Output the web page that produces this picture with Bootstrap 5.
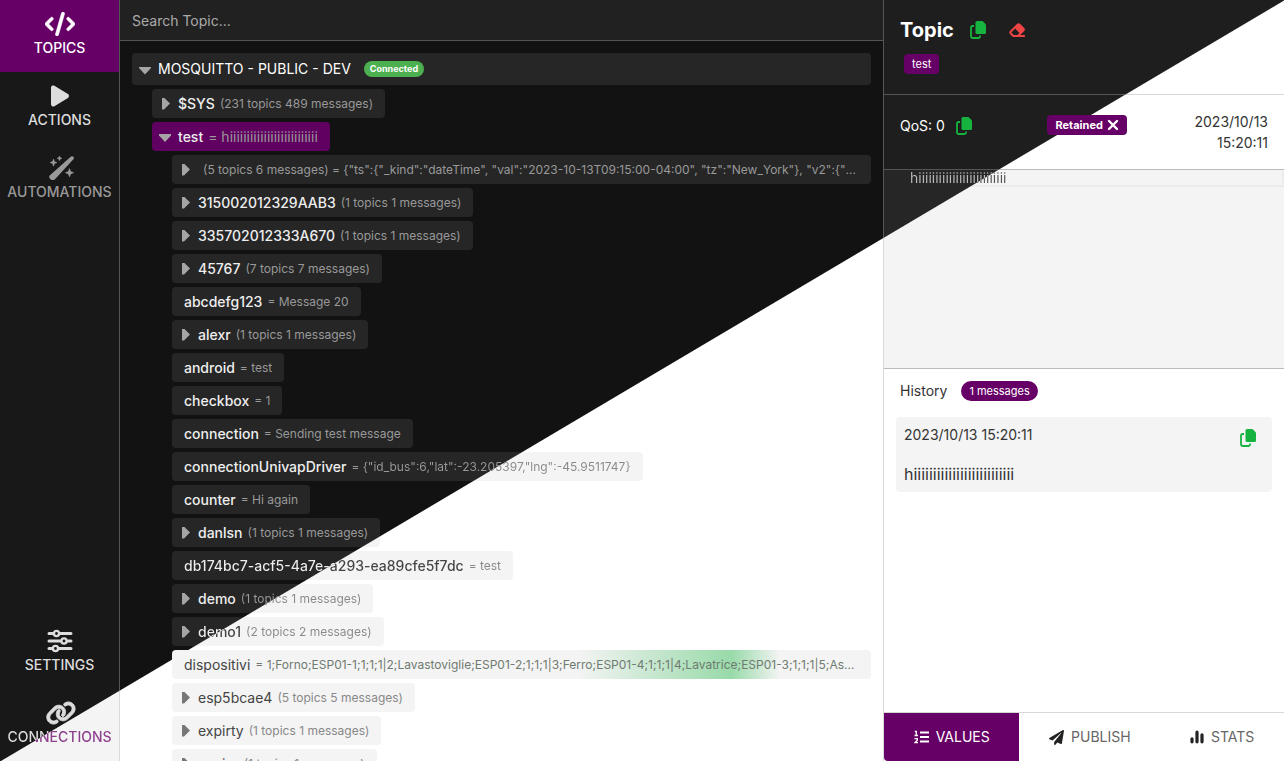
<!DOCTYPE html>
<html lang="en">
<head>
<meta charset="utf-8">
<meta name="viewport" content="width=device-width, initial-scale=1">
<title>MQTT Topics</title>
<link href="https://cdn.jsdelivr.net/npm/bootstrap@5.3.0/dist/css/bootstrap.min.css" rel="stylesheet">
<style>
  /* Each --d/--l pair is the dark and the light theme colour of a surface;
     .duo paints both, divided along the window's diagonal. */
  :root { --brand: #660066; --ok: #17b33f; }
  body { font-family: "Inter", sans-serif; font-size: 14px; line-height: 20px; color: #333; }
  .duo, .duo-ink {
    background: linear-gradient(to bottom right, var(--d) 50%, var(--l) calc(50% + 1px)) fixed;
  }
  .duo-ink { -webkit-background-clip: text; background-clip: text; color: transparent; }
  .line { --d: #555; --l: #d8d8d8; }
  .rule-h { height: 1px; flex: none; }
  .rule-v { width: 1px; flex: none; }
  .rule-strong { --l: #bbb; }

  .side { --d: #181818; --l: #f4f4f4; width: 119px; flex: none; }
  .side a { height: 72px; padding: 12px 0; gap: 2px; color: #ddd; font-weight: 500; text-decoration: none; }
  .side a.on { background: var(--brand); color: #fff; }
  .side a.dim { color: #999; }
  .side svg { height: 24px; }
  .side .duo-ink { --d: #ddd; --l: #8d3f8d; }

  .mid { --d: #121212; --l: #fff; min-width: 0; }
  .find { height: 40px; padding: 0 12px; background: #212121; border: 0; color: #bbb; }
  .find::placeholder { color: #aaa; }
  .tree { padding: 12px 12px 0; overflow: hidden; min-height: 0; }
  .tree ul { list-style: none; margin: 0; padding: 4px 0 0 20px; display: flex; flex-direction: column; gap: 4px; }
  .node { --d: #262626; --l: #f4f4f4; border: 0; border-radius: 4px; height: 29px; padding: 0 12px;
    max-width: 100%; display: flex; align-items: center; gap: 5px; text-align: left; white-space: nowrap; color: #fff; }
  .node.root { height: 32px; width: 100%; }
  .node.on { background: #600060; }
  .node b { font-weight: 500; color: #eee; }
  .node b.duo-ink { --d: #eee; --l: #444; color: transparent; }
  .node small { font-size: 12px; color: #999; overflow: hidden; text-overflow: ellipsis; }
  .node.on small { font-size: 14px; }
  .node small.duo-ink { --d: #999; --l: #888; color: transparent; }
  .node.lit b { font-weight: 400; color: #444; }
  .node.lit small { color: #888; }
  .node.fresh { background: linear-gradient(90deg, #f4f4f4 58%, #98daa9 80%, #f4f4f4 87%); width: 100%; }
  .node.fresh small { color: #6f7a70; }
  .node.shut::before, .node.open::before { content: ""; flex: none; background: #a5a5a5; }
  .node.shut::before { width: 8px; height: 12px; margin: 0 3px 0 -2px; clip-path: polygon(0 0, 25% 0, 100% 50%, 25% 100%, 0 100%); }
  .node.open::before { width: 12px; height: 8px; margin: 3px 2px 0 -5px; clip-path: polygon(0 0, 100% 0, 100% 20%, 50% 100%, 0 20%); }
  .node.lit::before { background: #777; }
  .conn { background: #4caf50; font-size: 9px; line-height: 10px; font-weight: 700; padding: 3px 6px; margin-left: 8px; }

  .info { --d: #1e1e1e; --l: #fff; width: 400px; flex: none; }
  .info h1 { font-size: 20px; font-weight: 700; line-height: 24px; color: #fff; }
  .pill { background: var(--brand); color: #fff; font-size: 11px; line-height: 20px; border-radius: 4px; }
  .head { height: 94px; padding: 18px 16px; }
  .head-tools { gap: 22px; }
  .head .pill { margin: 12px 0 0 4px; }
  .meta { height: 74px; padding: 20px 16px 0; line-height: 21px; }
  .meta .pill { margin-left: 8px; }
  .meta time { margin-top: -4px; }
  .qos { gap: 11px; }
  .plain { border: 0; background: none; padding: 0; color: inherit; line-height: 0; }
  .msg { --d: #262626; --l: #f4f4f4; height: 198px; padding-left: 26px; }
  .msg-edge { --l: #ececec; padding: 0 2px 2px 0; }
  .msg-line { --l: #f4f4f4; }
  .msg pre { font: inherit; line-height: 15px; --d: #bbb; --l: #555; }
  .past { padding: 12px; }
  .past-head { gap: 14px; }
  .item { background: #f4f4f4; border-radius: 4px; padding: 8px; height: 75px; }
  .item .val { font-size: 16px; line-height: 20px; }
  .tabs { height: 48px; }
  .tabs button { border: 0; background: #fff; color: #666; padding: 0 28px; gap: 7px; }
  .tabs button svg { color: #222; }
  .tabs button.on, .tabs button.on svg { background: var(--brand); color: #fff; }
  .tabs button.on { border-bottom-left-radius: 4px; }
  .ok { color: var(--ok); }
</style>
</head>
<body>
<svg class="d-none" aria-hidden="true">
  <symbol id="copy" viewBox="0 0 16 18">
    <path fill="currentColor" d="M7 0h5.500L16 3.500V11.500a1.500 1.500 0 0 1-1.500 1.500H7a1.500 1.500 0 0 1-1.500-1.500V1.500A1.500 1.500 0 0 1 7 0z"/>
    <path fill="none" stroke="currentColor" stroke-width="1.800" d="M4 5H2.500A1.500 1.500 0 0 0 1 6.500v9A1.500 1.500 0 0 0 2.500 17h6a1.500 1.500 0 0 0 1.500-1.500v-1"/>
  </symbol>
</svg>
<div class="d-flex vh-100 overflow-hidden">

  <nav class="side duo d-flex flex-column text-center" aria-label="Main">
    <a class="on d-flex flex-column align-items-center" href="#topics">
      <svg viewBox="0 0 640 512" fill="currentColor" stroke="currentColor" stroke-width="14" aria-hidden="true"><path d="M392.800 1.200c-17-4.900-34.700 5-39.600 22l-128 448c-4.900 17 5 34.700 22 39.600s34.700-5 39.600-22l128-448c4.900-17-5-34.700-22-39.600zm80.600 120.100c-12.500 12.500-12.500 32.800 0 45.300L562.700 256l-89.400 89.400c-12.500 12.500-12.500 32.800 0 45.300s32.800 12.500 45.300 0l112-112c12.500-12.500 12.500-32.800 0-45.300l-112-112c-12.500-12.500-32.800-12.500-45.300 0zm-306.700 0c-12.500-12.500-32.800-12.500-45.300 0l-112 112c-12.500 12.500-12.500 32.800 0 45.300l112 112c12.500 12.500 32.800 12.500 45.300 0s12.500-32.800 0-45.300L77.300 256l89.400-89.400c12.500-12.500 12.500-32.800 0-45.300z"/></svg>
      <span>TOPICS</span></a>
    <a class="d-flex flex-column align-items-center" href="#actions">
      <svg viewBox="0 0 384 512" fill="currentColor" aria-hidden="true"><path d="M73 39c-14.800-9.100-33.400-9.400-48.500-.9S0 62.600 0 80V432c0 17.400 9.400 33.400 24.500 41.900s33.700 8.100 48.500-.9L361 297c14.300-8.700 23-24.200 23-41s-8.700-32.200-23-41L73 39z"/></svg>
      <span>ACTIONS</span></a>
    <a class="dim d-flex flex-column align-items-center" href="#automations">
      <svg viewBox="-5 0 31 24" fill="currentColor" aria-hidden="true"><path d="M1 19.300 22 .6Q23.300-.3 24.400.7 25.300 1.800 24.600 3L6 23.200Q3.800 25 1.500 23.300-.8 21.300 1 19.300z"/><path d="M4.500 3l1 2.600L8 6.600 5.500 7.600 4.500 10.200 3.500 7.600 1 6.600l2.500-1zM10.500 0l.7 1.600 1.700.7-1.700.7-.7 1.700-.7-1.700L8.100 2.300l1.700-.7zM20.500 12.500l1.200 3L24.700 16.700l-3 1.200-1.200 3-1.200-3-3-1.200 3-1.200z" stroke="currentColor" stroke-width=".5"/></svg>
      <span>AUTOMATIONS</span></a>
    <a class="mt-auto d-flex flex-column align-items-center" href="#settings">
      <svg viewBox="0 0 26 24" fill="none" stroke="currentColor" stroke-width="3" stroke-linecap="round" aria-hidden="true"><path d="M2 4.500h4M13 4.500h11M2 12h11M21 12h3M2 19.500h3M12 19.500h12"/><g stroke-width="2.400"><circle cx="9.500" cy="4.500" r="2.600"/><circle cx="17" cy="12" r="2.600"/><circle cx="8.500" cy="19.500" r="2.600"/></g></svg>
      <span>SETTINGS</span></a>
    <a class="d-flex flex-column align-items-center" href="#connections">
      <svg viewBox="-20 0 600 512" fill="currentColor" stroke="currentColor" stroke-width="20" aria-hidden="true" overflow="visible"><path d="M579.800 267.700c56.500-56.500 56.500-148 0-204.500c-50-50-128.800-56.500-186.300-15.400l-1.600 1.100c-14.400 10.300-17.700 30.300-7.400 44.600s30.300 17.700 44.600 7.400l1.600-1.100c32.100-22.900 76-19.300 103.800 8.600c31.500 31.500 31.500 82.500 0 114L422.300 334.800c-31.500 31.500-82.500 31.500-114 0c-27.900-27.900-31.500-71.800-8.600-103.800l1.100-1.600c10.300-14.400 6.900-34.400-7.400-44.600s-34.400-6.900-44.600 7.400l-1.100 1.600C206.500 251.200 213 330 263 380c56.500 56.500 148 56.500 204.500 0L579.800 267.700zM60.200 244.300c-56.500 56.500-56.500 148 0 204.500c50 50 128.800 56.500 186.300 15.400l1.600-1.100c14.400-10.300 17.700-30.300 7.400-44.600s-30.300-17.700-44.600-7.400l-1.600 1.100c-32.100 22.900-76 19.300-103.800-8.600C74 372 74 321 105.500 289.500L217.700 177.200c31.500-31.500 82.500-31.500 114 0c27.900 27.900 31.500 71.800 8.600 103.900l-1.100 1.600c-10.300 14.400-6.900 34.400 7.400 44.600s34.400 6.900 44.600-7.400l1.100-1.600C433.500 260.800 427 182 377 132c-56.500-56.500-148-56.500-204.500 0L60.200 244.300z"/></svg>
      <span class="duo-ink">CONNECTIONS</span></a>
  </nav>
  <div class="duo line rule-v"></div>

  <main class="mid duo d-flex flex-column flex-grow-1">
    <input class="find flex-shrink-0 w-100" type="search" placeholder="Search Topic..." aria-label="Search Topic">
    <div class="duo line rule-h"></div>
    <div class="tree flex-grow-1">
      <button class="node duo root open" type="button">MOSQUITTO - PUBLIC - DEV <span class="badge rounded-pill conn">Connected</span></button>
      <ul>
        <li><button class="node duo shut" type="button"><b>$SYS</b><small>(231 topics 489 messages)</small></button></li>
        <li><button class="node on open" type="button"><b>test</b><small>= hiiiiiiiiiiiiiiiiiiiiiiiiii</small></button>
          <ul>
            <li><button class="node duo shut" type="button"><b></b><small>(5 topics 6 messages) = {"ts":{"_kind":"dateTime", "val":"2023-10-13T09:15:00-04:00", "tz":"New_York"}, "v2":{"_kind":"dateTime", "val":"2023-10-13"}}</small></button></li>
            <li><button class="node duo shut" type="button"><b>315002012329AAB3</b><small>(1 topics 1 messages)</small></button></li>
            <li><button class="node duo shut" type="button"><b>335702012333A670</b><small>(1 topics 1 messages)</small></button></li>
            <li><button class="node duo shut" type="button"><b>45767</b><small>(7 topics 7 messages)</small></button></li>
            <li><button class="node duo" type="button"><b>abcdefg123</b><small>= Message 20</small></button></li>
            <li><button class="node duo shut" type="button"><b>alexr</b><small>(1 topics 1 messages)</small></button></li>
            <li><button class="node duo" type="button"><b>android</b><small>= test</small></button></li>
            <li><button class="node duo" type="button"><b>checkbox</b><small>= 1</small></button></li>
            <li><button class="node duo" type="button"><b>connection</b><small>= Sending test message</small></button></li>
            <li><button class="node duo" type="button"><b>connectionUnivapDriver</b><small class="duo-ink">= {"id_bus":6,"lat":-23.205397,"lng":-45.9511747}</small></button></li>
            <li><button class="node duo" type="button"><b>counter</b><small>= Hi again</small></button></li>
            <li><button class="node duo shut" type="button"><b>danlsn</b><small>(1 topics 1 messages)</small></button></li>
            <li><button class="node duo" type="button"><b class="duo-ink">db174bc7-acf5-4a7e-a293-ea89cfe5f7dc</b><small class="duo-ink">= test</small></button></li>
            <li><button class="node duo shut" type="button"><b>demo</b><small class="duo-ink">(1 topics 1 messages)</small></button></li>
            <li><button class="node duo shut" type="button"><b class="duo-ink">demo1</b><small class="duo-ink">(2 topics 2 messages)</small></button></li>
            <li><button class="node lit fresh" type="button"><b>dispositivi</b><small>= 1;Forno;ESP01-1;1;1;1|2;Lavastoviglie;ESP01-2;1;1;1|3;Ferro;ESP01-4;1;1;1|4;Lavatrice;ESP01-3;1;1;1|5;Asciugatrice;ESP01-5;1;1;1</small></button></li>
            <li><button class="node duo lit shut" type="button"><b>esp5bcae4</b><small>(5 topics 5 messages)</small></button></li>
            <li><button class="node duo lit shut" type="button"><b>expirty</b><small>(1 topics 1 messages)</small></button></li>
            <li><button class="node duo lit shut" type="button"><b>expiry</b><small>(1 topics 1 messages)</small></button></li>
          </ul></li>
      </ul>
    </div>
  </main>
  <div class="duo line rule-v"></div>

  <aside class="info duo d-flex flex-column">
    <header class="head">
      <div class="d-flex align-items-center head-tools">
        <div class="d-flex align-items-center gap-3"><h1 class="mb-0">Topic</h1>
        <button class="plain ok" type="button" aria-label="Copy topic"><svg width="16" height="18"><use href="#copy"/></svg></button></div>
        <button class="plain" type="button" aria-label="Clear topic"><svg width="18" height="16" viewBox="10 0 550 512" fill="#ee4444"><path d="M290.700 57.400L57.400 290.700c-25 25-25 65.500 0 90.500l80 80c12 12 28.300 18.700 45.300 18.700H512c17.700 0 32-14.300 32-32s-14.300-32-32-32H387.900L518.600 285.300c25-25 25-65.500 0-90.500L381.300 57.400c-25-25-65.500-25-90.500 0zM297.400 416H182.600l-80-80L227.300 211.300 364.700 348.700 297.400 416z"/></svg></button>
      </div>
      <span class="pill d-inline-block px-2">test</span>
    </header>
    <div class="duo line rule-h"></div>
    <div class="meta d-flex align-items-start justify-content-between">
      <div class="d-flex align-items-center text-white qos">QoS: 0
        <button class="plain ok" type="button" aria-label="Copy message"><svg width="16" height="18"><use href="#copy"/></svg></button></div>
      <span class="pill d-flex align-items-center px-2 fw-bold gap-1">Retained
        <button class="plain" type="button" aria-label="Clear retained"><svg width="12" height="12" viewBox="0 0 12 12" stroke="#fff" stroke-width="2.400" stroke-linecap="round"><path d="M2 2l8 8M10 2l-8 8"/></svg></button></span>
      <time class="text-end">2023/10/13<br>15:20:11</time>
    </div>
    <div class="duo line rule-strong rule-h"></div>
    <div class="msg duo flex-shrink-0"><div class="msg-edge duo"><div class="msg-line duo"><pre class="duo-ink mb-0">hiiiiiiiiiiiiiiiiiiiiiiiiii</pre></div></div></div>
    <div class="duo line rule-strong rule-h"></div>
    <section class="past flex-grow-1">
      <div class="d-flex align-items-center ps-1 mb-3 past-head">History <span class="pill rounded-pill px-2">1 messages</span></div>
      <article class="item d-flex justify-content-between">
        <div class="d-flex flex-column justify-content-between"><time>2023/10/13 15:20:11</time><span class="val">hiiiiiiiiiiiiiiiiiiiiiiiiii</span></div>
        <button class="plain ok align-self-start p-2 pt-1" type="button" aria-label="Copy value"><svg width="16" height="18"><use href="#copy"/></svg></button>
      </article>
    </section>
    <div class="duo line rule-h"></div>
    <div class="tabs d-flex" role="group" aria-label="View">
      <button class="on flex-fill d-flex align-items-center justify-content-center" type="button"><svg width="15" height="14" viewBox="0 0 15 14" fill="none" stroke="currentColor" aria-hidden="true"><path stroke-width="2" d="M6 2.500h9M6 7h9M6 11.500h9"/><path stroke-width="1.300" d="M.8 1.500h1.500v4M.5 5.500h3.500M.5 8.700h2.800v1.500L1 12.700h3"/></svg>VALUES</button>
      <button class="flex-fill d-flex align-items-center justify-content-center" type="button"><svg width="15" height="15" viewBox="0 0 512 512" fill="currentColor" aria-hidden="true"><path d="M476 3.200L12.500 270.600c-18.100 10.400-15.800 35.600 2.200 43.200L121 358.400l287.300-253.200c5.500-4.900 13.300 2.600 8.600 8.300L176 407v80.500c0 23.600 28.500 32.900 42.500 15.800L282 426l124.600 52.200c14.200 6 30.400-2.900 33-18.200l72-432C515 7.800 493.300-6.800 476 3.200z"/></svg>PUBLISH</button>
      <button class="flex-fill d-flex align-items-center justify-content-center" type="button"><svg width="14" height="14" viewBox="0 0 14 14" stroke="currentColor" stroke-width="3.200" stroke-linecap="round" aria-hidden="true"><path d="M2 8.800v3M7 2.200v9.600M12 4.800v7"/></svg>STATS</button>
    </div>
  </aside>
</div>
<script src="https://cdn.jsdelivr.net/npm/bootstrap@5.3.0/dist/js/bootstrap.bundle.min.js"></script>
</body>
</html>
